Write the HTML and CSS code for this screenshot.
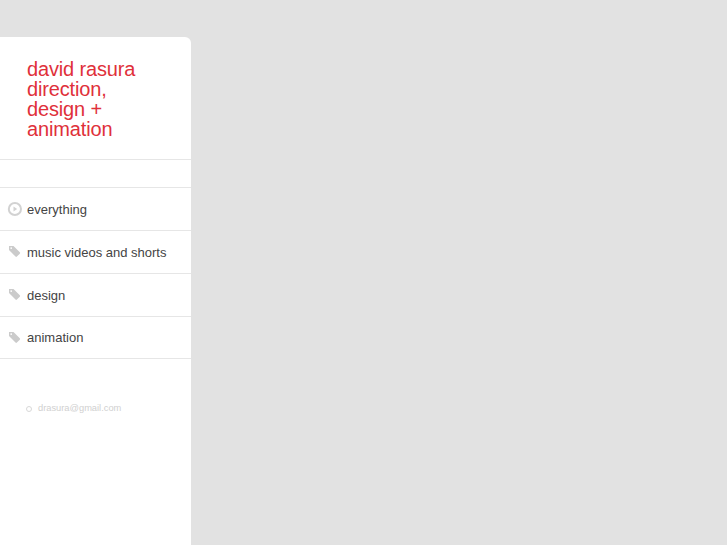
FILE: index.html
```html
<!DOCTYPE html>
<html lang="en">
<head>
  <meta charset="UTF-8">
  <meta name="viewport" content="width=device-width, initial-scale=1.0">
  <title>david rasura</title>
  <link rel="stylesheet" href="styles.css">
</head>
<body>
  <div class="sidebar">
    <div class="masthead">
      <h1>david rasura<br>direction,<br>design +<br>animation</h1>
    </div>
    <ul class="nav">
      <li>
        <svg class="icon" width="16" height="16" viewBox="0 0 16 16"><circle cx="7.9" cy="8" r="6.1" fill="none" stroke="#d2d2d2" stroke-width="2"/><path d="M6.500 5.500 10.200 8 6.500 10.500z" fill="#d2d2d2"/></svg>
        <a href="#">everything</a>
      </li>
      <li>
        <svg class="icon" width="16" height="16" viewBox="0 0 16 16"><path fill-rule="evenodd" d="M2 2h4.500l6.300 6.300a1 1 0 0 1 0 1.400l-2.900 2.900a1 1 0 0 1-1.400 0L2 6zM4.200 3.200a.9.900 0 1 0 0 1.800.9.900 0 0 0 0-1.800z" fill="#cbcbcb"/></svg>
        <a href="#">music videos and shorts</a>
      </li>
      <li>
        <svg class="icon" width="16" height="16" viewBox="0 0 16 16"><path fill-rule="evenodd" d="M2 2h4.500l6.300 6.300a1 1 0 0 1 0 1.400l-2.900 2.900a1 1 0 0 1-1.400 0L2 6zM4.200 3.200a.9.900 0 1 0 0 1.800.9.900 0 0 0 0-1.800z" fill="#cbcbcb"/></svg>
        <a href="#">design</a>
      </li>
      <li>
        <svg class="icon" width="16" height="16" viewBox="0 0 16 16"><path fill-rule="evenodd" d="M2 2h4.500l6.300 6.300a1 1 0 0 1 0 1.400l-2.900 2.900a1 1 0 0 1-1.400 0L2 6zM4.200 3.200a.9.900 0 1 0 0 1.800.9.900 0 0 0 0-1.800z" fill="#cbcbcb"/></svg>
        <a href="#">animation</a>
      </li>
    </ul>
    <div class="contact">
      <span class="dot"></span>
      <a href="#">drasura@gmail.com</a>
    </div>
  </div>
</body>
</html>
```

FILE: styles.css
```css
html, body {
  height: 100%;
}
body {
  margin: 0;
  background: #e2e2e2;
  font-family: 'Liberation Sans', Arial, sans-serif;
  overflow: hidden;
}
a {
  color: inherit;
  text-decoration: none;
}
.sidebar {
  width: 191px;
  height: 508px;
  margin-top: 37px;
  background: #fff;
  border-top-right-radius: 6px;
}
.masthead {
  height: 122px;
  padding-left: 27px;
  border-bottom: 1px solid #e6e6e6;
}
h1 {
  margin: 0;
  padding-top: 21.6px;
  font-size: 20px;
  font-weight: normal;
  line-height: 20.3px;
  letter-spacing: -0.15px;
  color: #e0303a;
}
.nav {
  list-style: none;
  margin: 27px 0 0;
  padding: 0;
  border-top: 1px solid #e6e6e6;
}
.nav li {
  display: flex;
  align-items: center;
  height: 42px;
  padding-left: 7px;
  border-bottom: 1px solid #e6e6e6;
  font-size: 13px;
  color: #444;
}
.nav li:last-child {
  height: 41px;
}
.icon {
  flex: none;
  margin-right: 4px;
}
.contact {
  display: flex;
  align-items: center;
  margin-top: 44px;
  padding-left: 26px;
  font-size: 9.3px;
  color: #d0d0d0;
}
.dot {
  width: 4px;
  height: 4px;
  margin: 2px 6px 0 0;
  border: 1.5px solid #d8d8d8;
  border-radius: 50%;
}
```
